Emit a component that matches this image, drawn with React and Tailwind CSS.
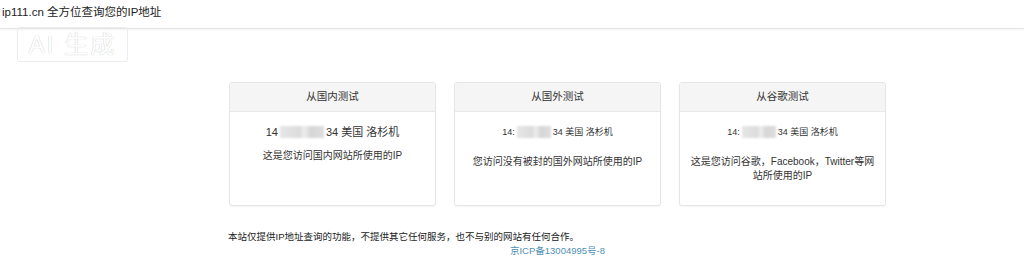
import React from "react";

const FONT = "font-['Liberation_Sans','Noto_Sans_CJK_SC',sans-serif]";

function Blur({ w }) {
  return (
    <span
      className={`inline-block ${w} h-[12px] align-middle mx-[2px] bg-[linear-gradient(90deg,#e6e6e6_0%,#dcdcdc_45%,#eeeeee_55%,#d6d6d6_70%,#dddddd_100%)] blur-[1px]`}
    />
  );
}

function Card({ title, lead, desc, descClass, ipClass, blurW }) {
  return (
    <div className="w-[207px] h-[124px] border border-[#e6e6e6] rounded-[3px] bg-white shadow-[0_1px_2px_rgba(0,0,0,0.04)] overflow-hidden">
      <div className="h-[29px] bg-[#f5f5f5] border-b border-[#e8e8e8] flex items-center justify-center text-[10.5px] text-[#333]">
        {title}
      </div>
      <div className="px-[10px] text-center text-[#333]">
        <div className={`mt-[13px] leading-[14px] flex items-center justify-center ${ipClass}`}>
          <span>{lead}</span>
          <Blur w={blurW} />
          <span>34 美国 洛杉机</span>
        </div>
        <div className={`text-[10px] leading-[14px] ${descClass}`}>{desc}</div>
      </div>
    </div>
  );
}

export default function App() {
  return (
    <div className={`relative w-[1024px] h-[269px] bg-white overflow-hidden ${FONT}`}>
      <div className="h-[29px] border-b border-[#e4e4e4] shadow-[0_1px_2px_rgba(0,0,0,0.05)] flex items-center pl-[2px] pb-[3px] text-[11.5px] text-[#222]">
        ip111.cn 全方位查询您的IP地址
      </div>

      <div className="absolute left-[17px] top-[27px] w-[111px] h-[35px] border border-[#ececec] rounded-[3px] flex items-center justify-center text-[24px] text-white [text-shadow:0_0_1px_#cfcfcf,0_0_1px_#cfcfcf] tracking-[2px]">
        AI 生成
      </div>

      <div className="ml-[229px] w-[657px] mt-[53px] flex justify-between">
        <Card
          title="从国内测试"
          lead="14"
          blurW="w-[44px]"
          ipClass="text-[11px]"
          desc="这是您访问国内网站所使用的IP"
          descClass="mt-[10px]"
        />
        <Card
          title="从国外测试"
          lead="14:"
          blurW="w-[34px]"
          ipClass="text-[9px]"
          desc="您访问没有被封的国外网站所使用的IP"
          descClass="mt-[16px]"
        />
        <Card
          title="从谷歌测试"
          lead="14:"
          blurW="w-[34px]"
          ipClass="text-[9px]"
          desc="这是您访问谷歌，Facebook，Twitter等网站所使用的IP"
          descClass="mt-[16px]"
        />
      </div>

      <div className="ml-[228px] w-[657px] mt-[24px] text-[9.5px] leading-[14px] text-[#222]">
        本站仅提供IP地址查询的功能，不提供其它任何服务，也不与别的网站有任何合作。
      </div>
      <div className="ml-[229px] w-[657px] text-center text-[9.5px] leading-[14px] text-[#4f8fb5]">
        京ICP备13004995号-8
      </div>
    </div>
  );
}
